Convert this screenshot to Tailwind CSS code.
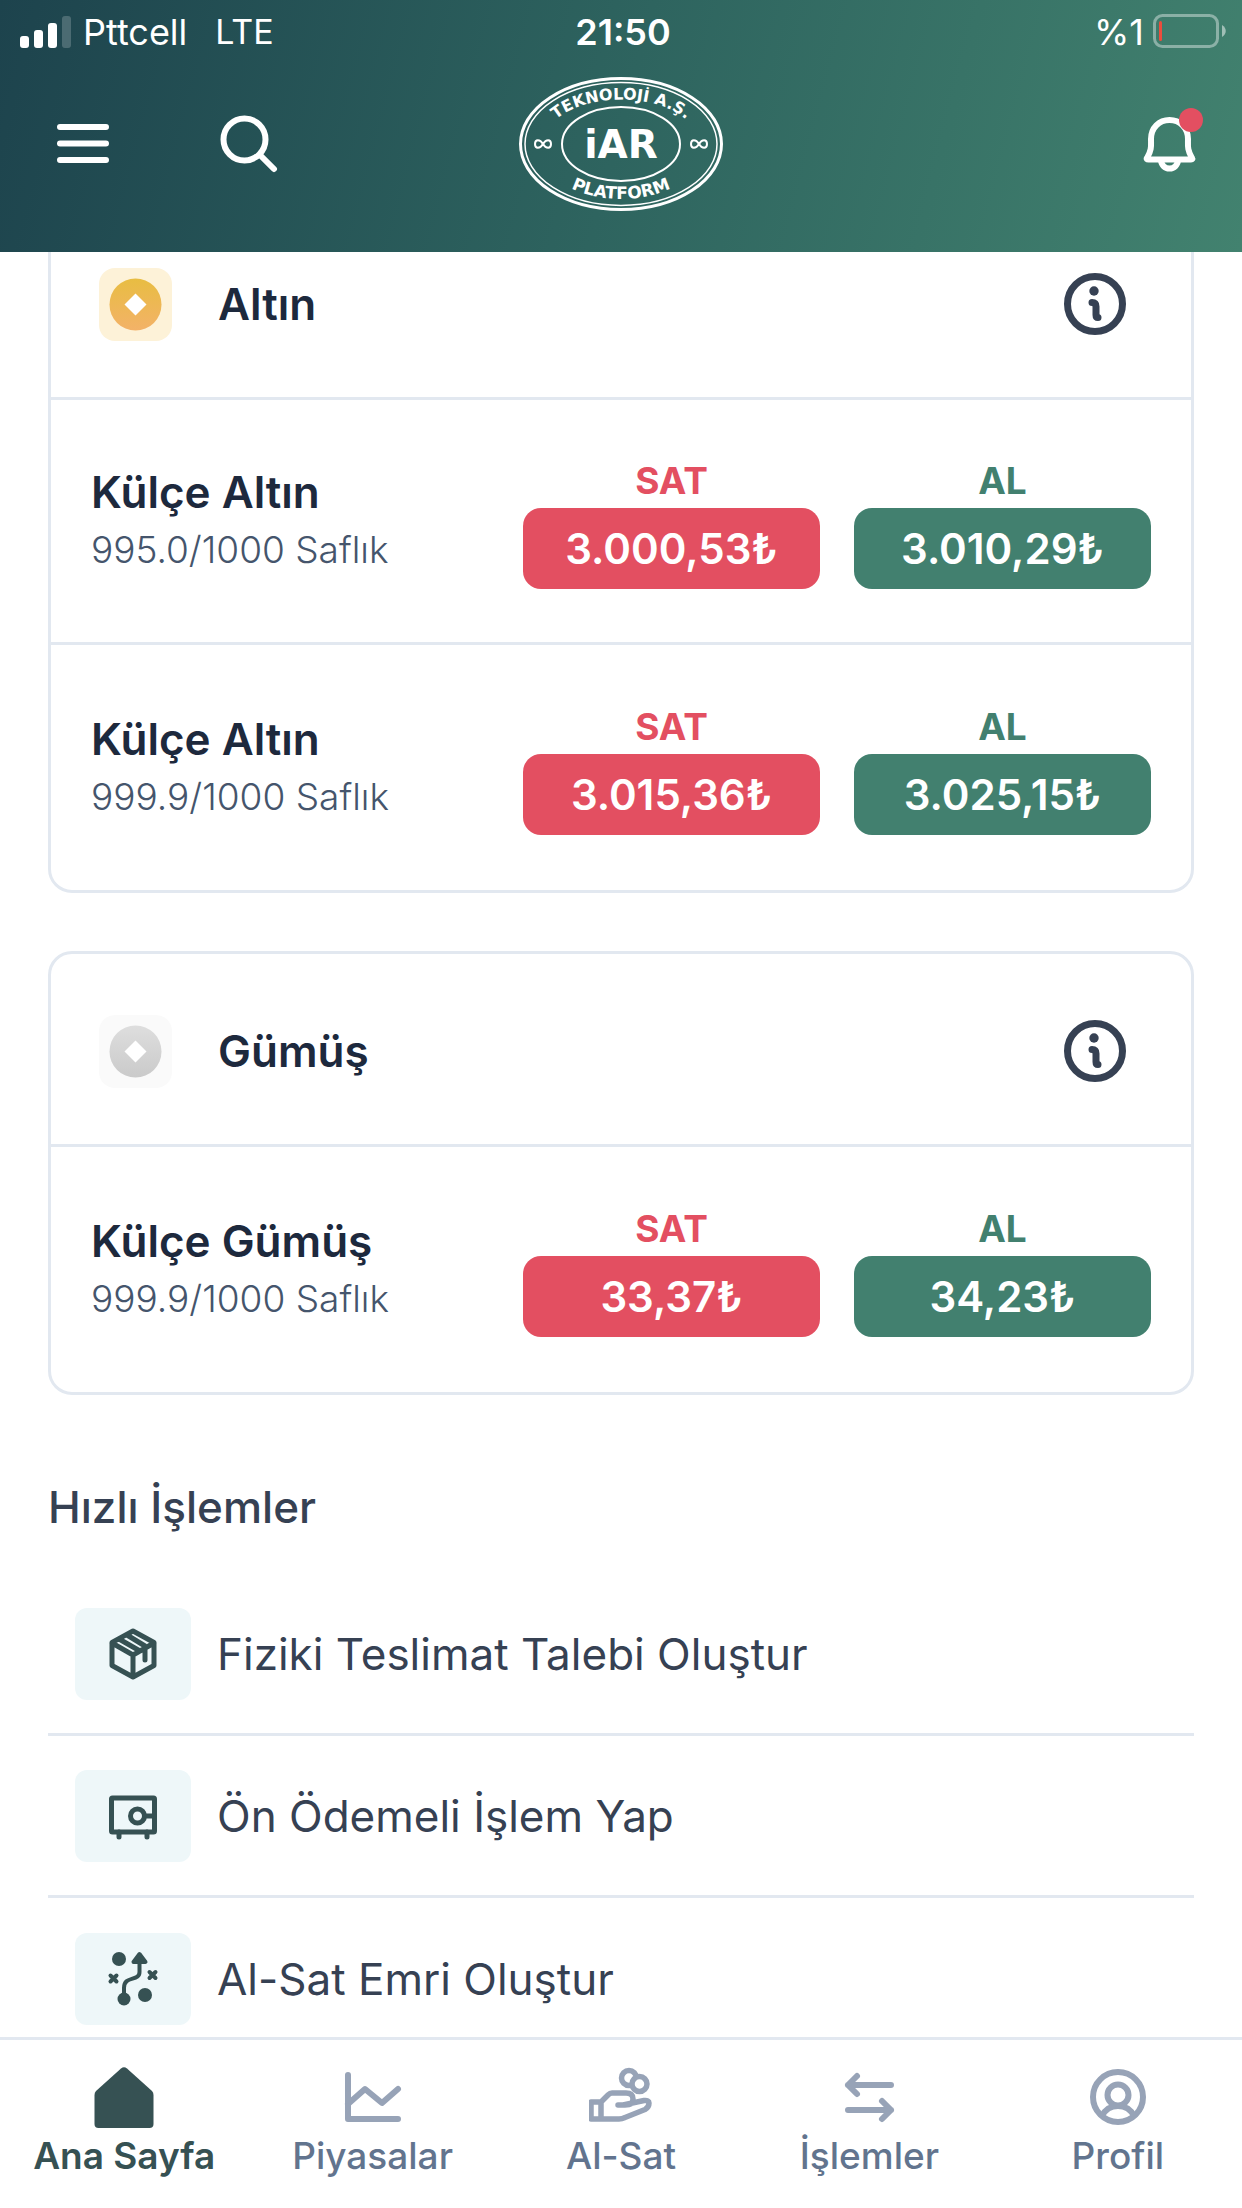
<!DOCTYPE html>
<html lang="tr">
<head>
    <meta charset="UTF-8">
    <meta name="viewport" content="width=device-width, initial-scale=1.0">
    <title>Ana Sayfa - İAR Platform</title>
    <script src="https://cdn.jsdelivr.net/npm/@tailwindcss/browser@4"></script>
</head>
<body class="bg-white font-[Inter,'Liberation_Sans',sans-serif]">
<div class="h-screen flex flex-col overflow-hidden">

    <!-- Header -->
    <header class="shrink-0 text-white bg-[linear-gradient(105deg,#1d434d_0%,#2e645f_50%,#42826f_100%)]">
        <!-- Status bar -->
        <div class="grid grid-cols-3 items-center h-16 pl-5 pr-4">
            <div class="flex items-center text-[36px] leading-none">
                <svg class="w-[51px] h-8 mr-3" viewBox="0 0 51 32" fill="currentColor">
                    <rect x="0" y="20" width="9" height="12" rx="3"/>
                    <rect x="14" y="14" width="9" height="18" rx="3"/>
                    <rect x="28" y="7" width="9" height="25" rx="3"/>
                    <rect x="42" y="0" width="9" height="32" rx="3" opacity=".2"/>
                </svg>
                <span>Pttcell</span>
                <span class="ml-7 text-[34px]">LTE</span>
            </div>
            <div class="text-center text-[36px] leading-none font-semibold">21:50</div>
            <div class="flex items-center justify-end gap-2 text-[36px] leading-none">
                <span>%1</span>
                <svg class="w-[74px] h-9" viewBox="0 0 74 36" fill="none">
                    <rect x="2.500" y="1.500" width="63" height="31" rx="8" stroke="#fff" stroke-width="3" opacity=".4"/>
                    <rect x="7" y="7" width="3" height="20" rx="1.500" fill="#eb4d3d"/>
                    <path d="M70 11 C75 14 75 20 70 23 Z" fill="#fff" opacity=".5"/>
                </svg>
            </div>
        </div>
        <div class="grid grid-cols-3 items-start h-[188px] pt-3 px-10">
            <div class="flex gap-20 pt-8">
                <button type="button" aria-label="Menü" class="size-[84px] -mt-2 grid place-items-center">
                    <svg class="size-16" viewBox="0 0 64 64" stroke="currentColor" stroke-width="6" stroke-linecap="round"><path d="M10 17h46M10 33.500h46M10 50h46"/></svg>
                </button>
                <button type="button" aria-label="Ara" class="size-[84px] -mt-2 grid place-items-center">
                    <svg class="size-16" viewBox="0 0 64 64" fill="none" stroke="currentColor" stroke-width="6" stroke-linecap="round"><circle cx="30.500" cy="29.500" r="21"/><path d="M46 45 60 59"/></svg>
                </button>
            </div>
            <a href="#" aria-label="İAR Platform" class="justify-self-center">
                <svg class="w-[206px] h-[136px]" viewBox="0 0 206 136" fill="none" stroke="#fff">
                    <defs>
                        <path id="arc-top" d="M25 68 A78 44.500 0 0 1 181 68"/>
                        <path id="arc-bottom" d="M19 68 A84 55 0 0 0 187 68"/>
                    </defs>
                    <ellipse cx="103" cy="68" rx="100.500" ry="65.500" stroke-width="3"/>
                    <ellipse cx="103" cy="68" rx="96" ry="61.500" stroke-width="1.500"/>
                    <ellipse cx="103" cy="68" rx="59" ry="37" stroke-width="2"/>
                    <g fill="#fff" stroke="none" font-family="'DejaVu Sans'" font-weight="bold" text-anchor="middle">
                        <text font-size="16"><textPath href="#arc-top" startOffset="50%">TEKNOLOJİ A.Ş.</textPath></text>
                        <text font-size="17"><textPath href="#arc-bottom" startOffset="50%">PLATFORM</textPath></text>
                        <text x="103" y="82" font-size="39">iAR</text>
                    </g>
                    <g stroke-width="2">
                        <path d="M25 68c-3-5-8-5-8 0s5 5 8 0 8-5 8 0-5 5-8 0Z"/>
                        <path d="M181 68c-3-5-8-5-8 0s5 5 8 0 8-5 8 0-5 5-8 0Z"/>
                    </g>
                </svg>
            </a>
            <button type="button" aria-label="Bildirimler" class="relative justify-self-end size-16 mt-9">
                <svg class="size-16" viewBox="0 0 64 64" fill="none" stroke="currentColor" stroke-width="6" stroke-linejoin="round"><path d="M9 46c5-8 4-13 4-19C13 16 21 8 31.500 8S50 16 50 27c0 6-1 11 4 19q1 1.500-1 1.500H10.500Q8 47.500 9 46Z"/><path d="M23 48a8.500 8.500 0 0 0 17 0"/></svg>
                <span class="absolute -top-1 -right-px size-6 rounded-full bg-[#e34f61]"></span>
            </button>
        </div>
    </header>

    <main class="flex-1 min-h-0 overflow-hidden px-12">
        <!-- Altın -->
        <section class="-mt-12 mb-[58px] border-3 border-slate-200 rounded-3xl divide-y-3 divide-slate-200 text-slate-800">
            <div class="flex items-center h-[193px] pt-1 px-12">
                <svg class="size-[73px]" viewBox="0 0 73 73">
                    <defs><linearGradient id="gold" x2="0" y2="1"><stop stop-color="#e8bd42"/><stop offset="1" stop-color="#f3b268"/></linearGradient></defs>
                    <rect width="73" height="73" rx="16" fill="#fdf2d8"/><circle cx="36.500" cy="36.500" r="26" fill="url(#gold)"/><path d="m36.500 25.500 11 11-11 11-11-11Z" fill="#fff"/>
                </svg>
                <h2 class="flex-1 ml-[46px] text-[44px] leading-[58px] font-semibold">Altın</h2>
                <button type="button" aria-label="Altın bilgi" class="text-[#364153] mr-4">
                    <svg class="size-16" viewBox="0 0 64 64" fill="none" stroke="currentColor"><circle cx="32" cy="32" r="27.500" stroke-width="7"/><circle cx="31" cy="19" r="4.700" fill="currentColor" stroke="none"/><path d="M29 30.500q4 0 4 4V43q0 2.500 2 2.500" stroke-width="7" stroke-linecap="round"/></svg>
                </button>
            </div>
            <div class="flex items-center gap-[34px] h-[245px] pl-10 pr-10">
                <div class="flex-1 leading-[58px]">
                    <h3 class="text-[44px] leading-[58px] font-semibold">Külçe Altın</h3>
                    <p class="text-[37px] font-light text-slate-600">995.0/1000 Saflık</p>
                </div>
                <div class="w-[297px] text-center">
                    <div class="text-[37px] leading-[54px] font-bold text-[#e34f61]">SAT</div>
                    <button type="button" class="w-full h-[81px] rounded-[18px] bg-[#e34f61] text-white text-[42px] font-semibold">3.000,53₺</button>
                </div>
                <div class="w-[297px] text-center">
                    <div class="text-[37px] leading-[54px] font-bold text-[#42806f]">AL</div>
                    <button type="button" class="w-full h-[81px] rounded-[18px] bg-[#42806f] text-white text-[42px] font-semibold">3.010,29₺</button>
                </div>
            </div>
            <div class="flex items-center gap-[34px] h-[245px] pl-10 pr-10">
                <div class="flex-1 leading-[58px]">
                    <h3 class="text-[44px] leading-[58px] font-semibold">Külçe Altın</h3>
                    <p class="text-[37px] font-light text-slate-600">999.9/1000 Saflık</p>
                </div>
                <div class="w-[297px] text-center">
                    <div class="text-[37px] leading-[54px] font-bold text-[#e34f61]">SAT</div>
                    <button type="button" class="w-full h-[81px] rounded-[18px] bg-[#e34f61] text-white text-[42px] font-semibold">3.015,36₺</button>
                </div>
                <div class="w-[297px] text-center">
                    <div class="text-[37px] leading-[54px] font-bold text-[#42806f]">AL</div>
                    <button type="button" class="w-full h-[81px] rounded-[18px] bg-[#42806f] text-white text-[42px] font-semibold">3.025,15₺</button>
                </div>
            </div>
        </section>

        <!-- Gümüş -->
        <section class="border-3 border-slate-200 rounded-3xl divide-y-3 divide-slate-200 text-slate-800">
            <div class="flex items-center h-[193px] pt-1 px-12">
                <svg class="size-[73px]" viewBox="0 0 73 73">
                    <defs><linearGradient id="silver" x2="0" y2="1"><stop stop-color="#dedede"/><stop offset="1" stop-color="#cacaca"/></linearGradient></defs>
                    <rect width="73" height="73" rx="16" fill="#fafafa"/><circle cx="36.500" cy="36.500" r="26" fill="url(#silver)"/><path d="m36.500 25.500 11 11-11 11-11-11Z" fill="#fff"/>
                </svg>
                <h2 class="flex-1 ml-[46px] text-[44px] leading-[58px] font-semibold">Gümüş</h2>
                <button type="button" aria-label="Gümüş bilgi" class="text-[#364153] mr-4">
                    <svg class="size-16" viewBox="0 0 64 64" fill="none" stroke="currentColor"><circle cx="32" cy="32" r="27.500" stroke-width="7"/><circle cx="31" cy="19" r="4.700" fill="currentColor" stroke="none"/><path d="M29 30.500q4 0 4 4V43q0 2.500 2 2.500" stroke-width="7" stroke-linecap="round"/></svg>
                </button>
            </div>
            <div class="flex items-center gap-[34px] h-[245px] pl-10 pr-10">
                <div class="flex-1 leading-[58px]">
                    <h3 class="text-[44px] leading-[58px] font-semibold">Külçe Gümüş</h3>
                    <p class="text-[37px] font-light text-slate-600">999.9/1000 Saflık</p>
                </div>
                <div class="w-[297px] text-center">
                    <div class="text-[37px] leading-[54px] font-bold text-[#e34f61]">SAT</div>
                    <button type="button" class="w-full h-[81px] rounded-[18px] bg-[#e34f61] text-white text-[42px] font-semibold">33,37₺</button>
                </div>
                <div class="w-[297px] text-center">
                    <div class="text-[37px] leading-[54px] font-bold text-[#42806f]">AL</div>
                    <button type="button" class="w-full h-[81px] rounded-[18px] bg-[#42806f] text-white text-[42px] font-semibold">34,23₺</button>
                </div>
            </div>
        </section>

        <!-- Hızlı İşlemler -->
        <h2 class="mt-20 mb-9 text-[44px] leading-[64px] font-medium text-[#364153]">Hızlı İşlemler</h2>
        <nav class="divide-y-3 divide-slate-200 text-[44px] text-[#364153]">
            <a href="#" class="flex items-center h-[161px] pl-[27px]">
                <span class="w-[116px] h-[92px] mr-[26px] grid place-items-center rounded-xl bg-[#eef7f9] text-[#365153]">
                    <svg class="size-14" viewBox="0 0 56 56" fill="none" stroke="currentColor" stroke-width="5" stroke-linejoin="round" stroke-linecap="round"><path d="M28 5 49 16.500v23L28 51 7 39.500v-23ZM7 17l21 12 21-12M28 29v21M14 13l21 12M22 9l18 11v14"/></svg>
                </span>
                Fiziki Teslimat Talebi Oluştur
            </a>
            <a href="#" class="flex items-center h-[162px] pl-[27px]">
                <span class="w-[116px] h-[92px] mr-[26px] grid place-items-center rounded-xl bg-[#eef7f9] text-[#365153]">
                    <svg class="size-14" viewBox="0 0 56 56" fill="none" stroke="currentColor" stroke-width="5" stroke-linejoin="round" stroke-linecap="round"><rect x="6.500" y="10" width="43" height="34" rx="1"/><circle cx="32.500" cy="28" r="7"/><path d="M40 28h9M14 44v5M42 44v5"/></svg>
                </span>
                Ön Ödemeli İşlem Yap
            </a>
            <a href="#" class="flex items-center h-[162px] pl-[27px]">
                <span class="w-[116px] h-[92px] mr-[26px] grid place-items-center rounded-xl bg-[#eef7f9] text-[#365153]">
                    <svg class="size-14" viewBox="0 0 56 56" fill="none" stroke="currentColor" stroke-width="4" stroke-linecap="round"><g fill="currentColor" stroke="none"><circle cx="14" cy="8" r="7"/><circle cx="40" cy="44" r="7"/><circle cx="19" cy="48" r="6.500"/></g><path d="M34.500 3 40.500 11h-12Z" fill="currentColor" stroke-linejoin="round"/><path d="M19 47V37c0-13 15.500-6 15.500-16v-9M5.500 24.500l6 6m0-6-6 6M44.500 21l6 6m0-6-6 6"/></svg>
                </span>
                Al-Sat Emri Oluştur
            </a>
        </nav>
    </main>

    <!-- Bottom menu -->
    <nav class="shrink-0 grid grid-cols-5 h-[171px] pt-[25px] border-t-3 border-slate-200 bg-white text-[37px] leading-[54px] font-medium text-slate-500">
        <a href="#" class="flex flex-col items-center font-semibold text-[#365153]">
            <svg class="size-16" viewBox="0 0 64 64" fill="currentColor"><path d="M29 3.500q3-2.500 6 0L60 26q1.500 1.500 1.500 4v29q0 4-4 4h-51q-4 0-4-4V30q0-2.500 1.500-4Z"/></svg>
            Ana Sayfa
        </a>
        <a href="#" class="flex flex-col items-center">
            <svg class="size-16 text-[#97a3b7]" viewBox="0 0 64 64" fill="none" stroke="currentColor" stroke-width="6" stroke-linecap="round" stroke-linejoin="round"><path d="M7 10v44h50M7 39l17-15 17 14 16-14"/></svg>
            Piyasalar
        </a>
        <a href="#" class="flex flex-col items-center">
            <svg class="size-16 text-[#97a3b7]" viewBox="0 0 64 64" fill="none" stroke="currentColor" stroke-width="5.500" stroke-linecap="round" stroke-linejoin="round"><circle cx="40" cy="13" r="7.500"/><circle cx="50.500" cy="19" r="7.500" class="fill-white"/><path d="M11 37H2v17h28q3 0 6-1.500l20-8q4-2 4-6.500 0-3-5-2.500L34 40H29h7q8 0 8-6 0-6-7-6H23q-2 0-4 2l-7 7v17"/></svg>
            Al-Sat
        </a>
        <a href="#" class="flex flex-col items-center">
            <svg class="size-16 text-[#97a3b7]" viewBox="0 0 64 64" fill="none" stroke="currentColor" stroke-width="6" stroke-linecap="round" stroke-linejoin="round"><path d="M54 20H11m9-9-9 9 9 9M11 45h43m-9-9 9 9-9 9"/></svg>
            İşlemler
        </a>
        <a href="#" class="flex flex-col items-center">
            <svg class="size-16 text-[#97a3b7]" viewBox="0 0 64 64" fill="none" stroke="currentColor" stroke-width="6"><circle cx="32" cy="32" r="25"/><circle cx="32" cy="30" r="10.500"/><path d="M16 51q5-10 16-10t16 10"/></svg>
            Profil
        </a>
    </nav>
</div>
</body>
</html>
